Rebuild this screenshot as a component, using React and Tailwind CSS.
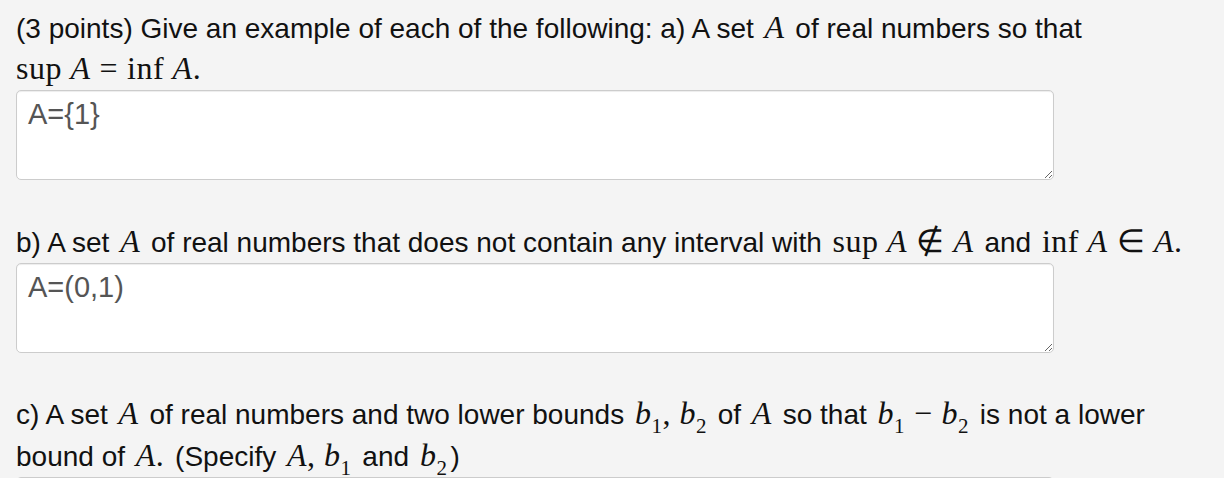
const sans = { fontFamily: '"Liberation Sans", Arial, sans-serif' };

function M({ children, className = '' }) {
  return (
    <span className={`mx-[3px] font-['Liberation_Serif','Times_New_Roman',serif] text-[32px] tracking-[0.5px] ${className}`}>{children}</span>
  );
}

function V({ children }) {
  return <span className="italic">{children}</span>;
}

function Rel({ children }) {
  return <span className="mx-[9px]">{children}</span>;
}

function B({ n }) {
  return (
    <>
      <V>b</V>
      <sub className="text-[21px] not-italic align-[-4px] leading-none">{n}</sub>
    </>
  );
}

function Answer({ value }) {
  return (
    <textarea
      readOnly
      defaultValue={value}
      className="block w-[1038px] h-[90px] bg-white border border-[#cccccc] rounded-[5px] px-[11px] py-[7px] text-[29px] leading-[32px] text-[#555555] font-['Liberation_Sans',Arial,sans-serif] shadow-[inset_0_1px_1px_rgba(0,0,0,0.075)] outline-none resize-y"
    />
  );
}

export default function App() {
  return (
    <div className="min-h-[478px] bg-[#f4f4f4] text-[#111111] pl-4 pr-4 pt-[8px] text-[28px] leading-[41px]" style={sans}>
      <div>
        <p className="leading-[39px]">
          (3 points) Give an example of each of the following: a) A set <M><V>A</V></M> of real numbers so that
        </p>
        <p>
          <M className="ml-0">sup <V>A</V><Rel>=</Rel>inf <V>A</V>.</M>
        </p>
        <Answer value="A={1}" />
      </div>

      <div className="mt-[41px]">
        <p>
          b) A set <M><V>A</V></M> of real numbers that does not contain any interval with{' '}
          <M>sup <V>A</V><Rel>∉</Rel><V>A</V></M> and <M>inf <V>A</V><Rel>∈</Rel><V>A</V>.</M>
        </p>
        <Answer value="A=(0,1)" />
      </div>

      <div className="mt-[40px]">
        <p className="leading-[40px]">
          c) A set <M><V>A</V></M> of real numbers and two lower bounds <M><B n="1" />, <B n="2" /></M> of{' '}
          <M><V>A</V></M> so that <M><B n="1" /><Rel>−</Rel><B n="2" /></M> is not a lower bound of <M><V>A</V>.</M> (Specify{' '}
          <M><V>A</V>, <B n="1" /></M> and <M><B n="2" /></M>)
        </p>
        <Answer value="" />
      </div>
    </div>
  );
}
